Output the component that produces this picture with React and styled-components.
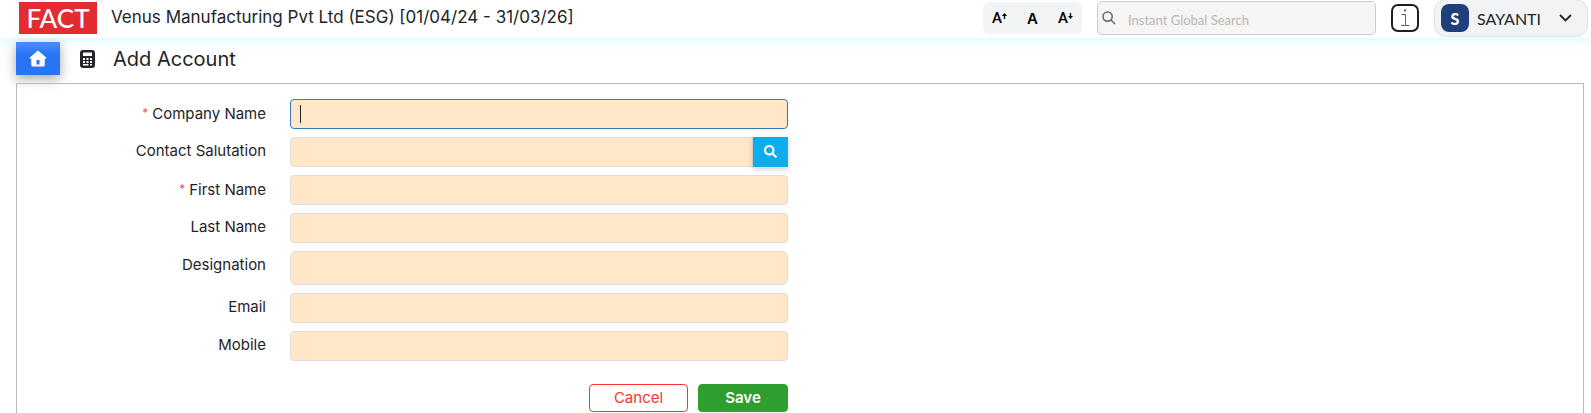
import React, { useState } from 'react'
import styled, { createGlobalStyle } from 'styled-components'
import { FaSearch } from 'react-icons/fa'

const GlobalStyle = createGlobalStyle`
  *, *::before, *::after {
    box-sizing: border-box;
  }
  body {
    margin: 0;
    background: #fff;
    color: #212529;
    font-family: Inter, 'Open Sans', sans-serif;
    font-size: 14px;
  }
  button, input {
    font: inherit;
    color: inherit;
  }
`
const Page = styled.div`
  display: flex;
  flex-direction: column;
  height: 100vh;
  overflow: hidden;
`
const Header = styled.header`
  flex: none;
  display: flex;
  align-items: center;
  height: 38px;
  padding: 0 3px 2px 19px;
  box-shadow: 0 4px 12px #e0faff;
`
const Logo = styled.a`
  display: flex;
  align-items: center;
  justify-content: center;
  width: 78px;
  height: 32px;
  margin-right: 14px;
  background: #e22c30;
  color: #fff;
  font-family: Lato, sans-serif;
  font-size: 26px;
  font-weight: 500;
  line-height: 32px;
  text-decoration: none;
`
const Company = styled.div`
  flex: 1;
  padding-bottom: 2px;
  font-size: 17px;
  white-space: nowrap;
`
const SizeGroup = styled.div`
  display: flex;
  align-items: center;
  justify-content: space-around;
  width: 99px;
  height: 32px;
  margin-right: 15px;
  border-radius: 6px;
  background: #f3f4f6;
`
const SizeButton = styled.button`
  display: flex;
  align-items: center;
  justify-content: center;
  width: 30px;
  height: 32px;
  padding: 0;
  border: 0;
  background: none;
  color: #000;
  font-family: ${props => props.$normal ? 'Inter' : 'Roboto'}, sans-serif;
  font-size: 15px;
  font-weight: ${props => props.$normal ? 600 : 500};
  cursor: pointer;

  svg {
    align-self: flex-start;
    margin-top: 11px;
  }
`
const Search = styled.label`
  display: flex;
  align-items: center;
  gap: 12px;
  width: 279px;
  height: 34px;
  margin-right: 15px;
  padding: 0 4px;
  border: 1px solid #ccc;
  border-radius: 5px;
  background: #f6f5f4;
  color: #666;

  input {
    flex: 1;
    min-width: 0;
    padding: 3px 0 0;
    border: 0;
    outline: none;
    background: none;
    font-family: Lato, sans-serif;
    font-size: 13px;
  }
  input::placeholder {
    color: #b8b8b8;
  }
`
const InfoButton = styled.button`
  display: flex;
  width: 28px;
  height: 28px;
  margin-right: 15px;
  padding: 0;
  border: 0;
  background: none;
  cursor: pointer;
`
const UserMenu = styled.button`
  display: flex;
  align-items: center;
  width: 154px;
  height: 38px;
  padding: 0 15px 0 6px;
  border: 1px solid #dee0e3;
  border-radius: 12px;
  background: #f2f3f5;
  font-family: Lato, sans-serif;
  font-size: 16px;
  cursor: pointer;

  svg {
    margin-left: auto;
  }
`
const Avatar = styled.span`
  display: flex;
  align-items: center;
  justify-content: center;
  width: 28px;
  height: 28px;
  margin-right: 8px;
  border-radius: 8px;
  background: #203d7c;
  color: #fff;
  font-family: Lato, sans-serif;
  font-size: 16px;
  font-weight: 900;
`
const TitleBar = styled.div`
  flex: none;
  display: flex;
  align-items: center;
  height: 45px;
  padding: 0 16px 4px;
`
const HomeButton = styled.a`
  display: flex;
  align-items: center;
  justify-content: center;
  width: 44px;
  height: 33px;
  margin-right: 20px;
  background: linear-gradient(#4a8ef8, #2874f5 40%);
  box-shadow: 0 4px 12px rgba(0, 0, 0, 0.35);
  color: #fff;
`
const Title = styled.h1`
  margin: 0 0 0 18px;
  font-size: 20px;
  font-weight: 400;
`
const Panel = styled.main`
  flex: 1 0 auto;
  margin: 0 7px 0 16px;
  padding: 15px 0;
  border: 1px solid #bbb;
  border-bottom: 0;
`
const Form = styled.form`
  display: flex;
  flex-direction: column;
  gap: 8px;
  width: 50%;
`
const Row = styled.div`
  display: grid;
  grid-template-columns: 1fr 2fr;

  > * {
    margin: 0 12px;
  }
`
const Label = styled.label`
  padding-top: 4px;
  font-size: 15px;
  line-height: 20px;
  text-align: right;
`
const Star = styled.span`
  color: #e0384a;
  font-family: Lato, sans-serif;
`
const Field = styled.div`
  position: relative;
  display: flex;
  height: ${props => props.$tall ? '34px' : '30px'};
`
const Input = styled.input`
  flex: 1;
  min-width: 0;
  padding: 0 9px;
  border: 1px solid #dcdcdc;
  border-radius: ${props => props.$joined ? '4px 0 0 4px' : props.$tall ? '6px' : '4px'};
  outline: none;
  background: #ffe7c8;

  &:focus {
    border-color: #337ab7;
  }
  &:focus:placeholder-shown {
    caret-color: transparent;
  }
`
// stands in for the native caret while the focused box is empty
const Caret = styled.span`
  display: none;
  position: absolute;
  top: 6px;
  left: 10px;
  width: 1px;
  height: 18px;
  background: #212529;
  pointer-events: none;

  ${Input}:focus:placeholder-shown ~ & {
    display: block;
  }
`
const LookupButton = styled.button`
  display: flex;
  align-items: center;
  justify-content: center;
  width: 35px;
  padding: 0 0 2px;
  border: 0;
  background: #0dacea;
  box-shadow: 0 2px 6px rgba(0, 0, 0, 0.2);
  color: #fff;
  cursor: pointer;
`
const Actions = styled.div`
  display: flex;
  justify-content: flex-end;
  gap: 10px;
  margin: 15px 12px 0;
`
const ActionButton = styled.button`
  width: ${props => props.$primary ? '90px' : '99px'};
  height: 28px;
  padding: 0 0 2px;
  border: 1px solid ${props => props.$primary ? '#2e9e2e' : '#ff3333'};
  border-radius: 4px;
  background: ${props => props.$primary ? '#2e9e2e' : '#fff'};
  color: ${props => props.$primary ? '#fff' : '#ff3333'};
  font-size: 15px;
  font-weight: ${props => props.$primary ? 600 : 400};
  cursor: pointer;
`

const fields = [
  { name: 'company', label: 'Company Name', required: true },
  { name: 'salutation', label: 'Contact Salutation', lookup: true },
  { name: 'firstName', label: 'First Name', required: true },
  { name: 'lastName', label: 'Last Name' },
  { name: 'designation', label: 'Designation', tall: true },
  { name: 'email', label: 'Email' },
  { name: 'mobile', label: 'Mobile' }
]

const SizeArrow = ({ down }) => (
  <svg width="5" height="6" viewBox="0 0 5 6">
    <path d={down ? 'M2.5 0v4' : 'M2.5 6V2'} stroke="#000" strokeWidth="1.3" />
    <path d={down ? 'M0 3h5L2.500 6z' : 'M0 3h5L2.500 0z'} fill="#000" />
  </svg>
)

const Calculator = () => (
  <svg width="15" height="18" viewBox="0 0 15 18">
    <rect width="15" height="18" rx="3" fill="#212529" />
    <path
      d="M3 2.500h9v3.500H3zM3 8h2v2H3zM6.500 8h2v2h-2zM10 8h2v2h-2zM3 11h2v2H3zM6.500 11h2v2h-2zM10 11h2v2h-2zM3 14h5.500v1.500H3zM10 14h2v1.500h-2z"
      fill="#fff" />
  </svg>
)

export default function App () {
  const [values, setValues] = useState({})
  const onChange = (e) => setValues({ ...values, [e.target.name]: e.target.value })

  return (
    <Page>
      <GlobalStyle />
      <Header>
        <Logo href="#">FACT</Logo>
        <Company>Venus Manufacturing Pvt Ltd (ESG) [01/04/24 - 31/03/26]</Company>
        <SizeGroup>
          <SizeButton type="button" aria-label="Increase text size">A<SizeArrow /></SizeButton>
          <SizeButton type="button" aria-label="Normal text size" $normal>A</SizeButton>
          <SizeButton type="button" aria-label="Decrease text size">A<SizeArrow down /></SizeButton>
        </SizeGroup>
        <Search>
          <svg width="14" height="14" viewBox="0 0 14 14" fill="none" stroke="currentColor" strokeWidth="1.5">
            <circle cx="5.6" cy="5.6" r="4.6" />
            <path d="M9 9l4 4" />
          </svg>
          <input type="text" aria-label="Search" placeholder="Instant Global Search" />
        </Search>
        <InfoButton type="button" aria-label="Information">
          <svg width="28" height="28" viewBox="0 0 28 28" fill="none">
            <rect x="1" y="1" width="26" height="26" rx="6" stroke="#1c1f2b" strokeWidth="2" />
            <path d="M10.5 10.5h4V22M10 21.5h8.5" stroke="#666" />
            <path d="M13 5.5h2v2h-2z" fill="#666" />
          </svg>
        </InfoButton>
        <UserMenu type="button">
          <Avatar>S</Avatar>
          SAYANTI
          <svg width="13" height="8" viewBox="0 0 13 8" fill="none" stroke="#212529" strokeWidth="1.8">
            <path d="M1 1l5.500 5.500L12 1" />
          </svg>
        </UserMenu>
      </Header>
      <TitleBar>
        <HomeButton href="#" aria-label="Home">
          <svg width="18" height="17" viewBox="0 0 18 17">
            <path d="M9 .5L.8 7.6c-.5.6-.2 1.2.5 1.2h1V15c0 .9.5 1.5 1.400 1.500h10.600c.9 0 1.400-.6 1.400-1.500V8.800h1c.7 0 1-.6.5-1.200zM7.500 10h3v4.500h-3z" fill="#fff" fillRule="evenodd" />
          </svg>
        </HomeButton>
        <Calculator />
        <Title>Add Account</Title>
      </TitleBar>
      <Panel>
        <Form>
          {fields.map(field => (
            <Row key={field.name}>
              <Label htmlFor={field.name}>
                {field.required && <Star>* </Star>}{field.label}
              </Label>
              <Field $tall={field.tall}>
                <Input
                  id={field.name}
                  name={field.name}
                  type="text"
                  placeholder=" "
                  value={values[field.name] || ''}
                  onChange={onChange}
                  autoFocus={field.name === 'company'}
                  $joined={field.lookup}
                  $tall={field.tall} />
                <Caret />
                {field.lookup &&
                  <LookupButton type="button" aria-label="Find salutation"><FaSearch size={13} /></LookupButton>}
              </Field>
            </Row>
          ))}
          <Actions>
            <ActionButton type="button">Cancel</ActionButton>
            <ActionButton type="submit" $primary>Save</ActionButton>
          </Actions>
        </Form>
      </Panel>
    </Page>
  )
}
